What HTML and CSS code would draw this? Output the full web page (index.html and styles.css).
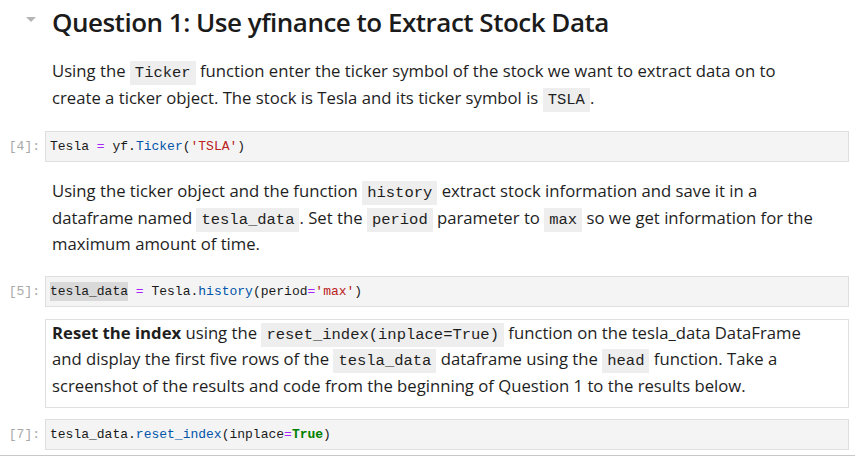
FILE: index.html
```html
<!DOCTYPE html>
<html>
<head>
<meta charset="utf-8">
<link rel="stylesheet" href="styles.css">
</head>
<body>
<div class="notebook">
  <div class="cell heading-cell">
    <div class="prompt"><span class="collapser"></span></div>
    <div class="md">
      <h2>Question 1: Use yfinance to Extract Stock Data</h2>
    </div>
  </div>

  <div class="cell md-cell md-a">
    <div class="prompt"></div>
    <div class="md">
      <p>Using the <code>Ticker</code> function enter the ticker symbol of the stock we want to extract data on to<br>create a ticker object. The stock is Tesla and its ticker symbol is <code>TSLA</code>.</p>
    </div>
  </div>

  <div class="cell code-cell code-a">
    <div class="prompt">[4]:</div>
    <div class="editor"><span class="v">Tesla</span> <span class="op">=</span> <span class="v">yf</span>.<span class="pr">Ticker</span>(<span class="st">'TSLA'</span>)</div>
  </div>

  <div class="cell md-cell md-b">
    <div class="prompt"></div>
    <div class="md">
      <p>Using the ticker object and the function <code>history</code> extract stock information and save it in a<br>dataframe named <code>tesla_data</code>. Set the <code>period</code> parameter to <code>max</code> so we get information for the<br>maximum amount of time.</p>
    </div>
  </div>

  <div class="cell code-cell code-b">
    <div class="prompt">[5]:</div>
    <div class="editor"><span class="v hl">tesla_data</span> <span class="op">=</span> <span class="v">Tesla</span>.<span class="pr">history</span>(<span class="v">period</span><span class="op">=</span><span class="st">'max'</span>)</div>
  </div>

  <div class="cell md-cell boxed">
    <div class="prompt"></div>
    <div class="md">
      <p><b>Reset the index</b> using the <code>reset_index(inplace=True)</code> function on the tesla_data DataFrame<br>and display the first five rows of the <code>tesla_data</code> dataframe using the <code>head</code> function. Take a<br>screenshot of the results and code from the beginning of Question 1 to the results below.</p>
    </div>
  </div>

  <div class="cell code-cell code-c">
    <div class="prompt">[7]:</div>
    <div class="editor"><span class="v">tesla_data</span>.<span class="pr">reset_index</span>(<span class="v">inplace</span><span class="op">=</span><span class="kw">True</span>)</div>
  </div>
  <div class="rule"></div>
</div>
</body>
</html>
```

FILE: styles.css
```css
html, body {
  margin: 0;
  padding: 0;
  background: #ffffff;
}
body {
  font-family: "Open Sans", "Noto Sans", sans-serif;
  color: #1e1e1e;
  width: 855px;
  height: 458px;
  overflow: hidden;
}
.notebook {
  padding-top: 4px;
}
.cell {
  display: flex;
  align-items: stretch;
  margin-right: 6px;
}
.prompt {
  width: 45px;
  flex: none;
  box-sizing: border-box;
  padding-right: 5px;
  text-align: right;
  font-family: "Liberation Mono", monospace;
  font-size: 13px;
  color: #a8a8a8;
  position: relative;
}
.collapser {
  position: absolute;
  left: 26px;
  top: 13px;
  width: 0;
  height: 0;
  border-left: 5.5px solid transparent;
  border-right: 5.5px solid transparent;
  border-top: 5px solid #b5b5b5;
}
.md {
  flex: 1;
  border: 1px solid transparent;
  padding: 0 6px;
}
h2 {
  margin: 0;
  font-size: 26px;
  font-weight: 600;
  letter-spacing: -0.5px;
  line-height: 34px;
  color: #1b1b1b;
}
p {
  margin: 0;
  font-size: 16.7px;
  line-height: 26.5px;
  white-space: nowrap;
}
b {
  font-weight: 700;
}
code {
  font-family: "Liberation Mono", monospace;
  font-size: 15.5px;
  line-height: 1;
  background: #eeeeee;
  padding: 3px 5px;
}
.md-a { margin-top: 17px; }
.code-a { margin-top: 19px; }
.md-b { margin-top: 15px; }
.code-b { margin-top: 17px; }
.boxed { margin-top: 12px; }
.code-c { margin-top: 11px; }

.code-cell .prompt {
  line-height: 31px;
}
.editor {
  flex: 1;
  background: #f4f4f4;
  border: 1px solid #dfdfdf;
  padding: 0 4px;
  font-family: "Liberation Mono", monospace;
  font-size: 13px;
  color: #1a1a1a;
  line-height: 29px;
  white-space: pre;
}
.boxed .md {
  border-color: #e0e0e0;
  padding-top: 0;
  padding-bottom: 8px;
}
.op { color: #aa22ff; }
.pr { color: #0055aa; }
.st { color: #ba2121; }
.kw { color: #008000; font-weight: 700; }
.hl { background: #d9d9d9; padding: 2px 0; }
.rule {
  margin-top: 5px;
  height: 1px;
  background: #c8c8c8;
}
```
